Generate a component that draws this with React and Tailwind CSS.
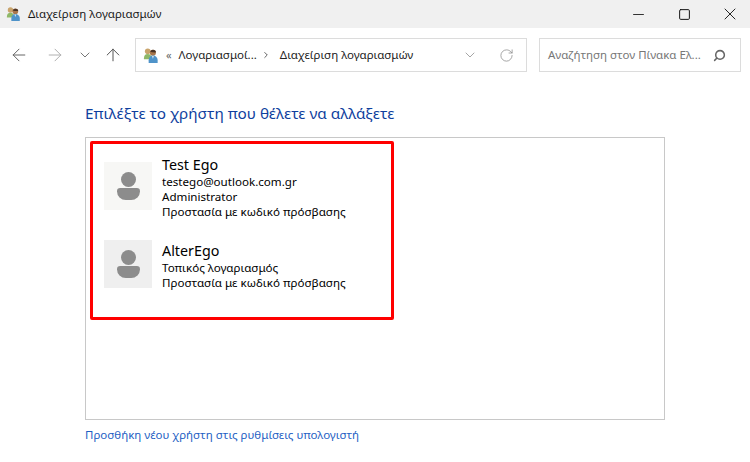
import React from "react";
import { ArrowLeft, ArrowRight, ArrowUp, ChevronDown, ChevronRight, RotateCw, Minus, Square, X, Search } from "lucide-react";

function UsersIcon({ size = 18 }) {
  return (
    <svg width={size} height={size} viewBox="0 0 18 18" className="shrink-0">
      <circle cx="5" cy="4.500" r="3" fill="#c9a46c" />
      <path d="M1 12c0-3 1.500-4.500 4-4.500S9 9 9 12v1H1z" fill="#8fb868" />
      <circle cx="10.500" cy="6" r="3.200" fill="#a9764a" />
      <path d="M10.500 3c2 0 3.200 1 3.200 2.500-2 .5-4.500 0-6-.5.500-1.200 1.500-2 2.800-2z" fill="#4a3325" />
      <path d="M6 17v-3c0-3 2-5 4.500-5S15.500 11 15.500 14v3z" fill="#4f93c9" />
      <path d="M9.500 9.500h2l-1 3z" fill="#dfeaf3" />
    </svg>
  );
}

function Avatar({ bg }) {
  return (
    <div className={`w-12 h-12 shrink-0 flex flex-col items-center justify-center ${bg}`}>
      <div className="w-[15px] h-[15px] rounded-full bg-[#8c8c8c]" />
      <div className="w-[23px] h-[12px] bg-[#8c8c8c] rounded-t-[4px] rounded-b-[11px] mt-[1px]" />
    </div>
  );
}

function Account({ avatar, name, lines }) {
  return (
    <div className="flex items-center gap-[10px] h-12">
      <Avatar bg={avatar} />
      <div className="mt-[1px]">
        <div className="text-[14.300px] leading-[18px] pt-[2px] text-black">{name}</div>
        {lines.map((line) => (
          <div key={line} className="text-[11.600px] leading-[15px] text-black">
            {line}
          </div>
        ))}
      </div>
    </div>
  );
}

export default function App() {
  return (
    <div className="w-[750px] h-[462px] bg-white overflow-hidden font-['Noto_Sans','Open_Sans',sans-serif]">
      <div className="h-[28px] bg-[#f0f0f0] flex items-center pl-[6px]">
        <UsersIcon size={16} />
        <span className="ml-[6px] text-[11.500px] text-[#1a1a1a]">Διαχείριση λογαριασμών</span>
        <div className="ml-auto -mr-[3px] flex items-center text-[#111]">
          <div className="w-[46px] flex justify-center"><Minus size={17} strokeWidth={1.2} /></div>
          <div className="w-[46px] flex justify-center"><Square size={13} strokeWidth={1.8} /></div>
          <div className="w-[46px] flex justify-center"><X size={20} strokeWidth={1.1} /></div>
        </div>
      </div>

      <div className="h-[54px] flex items-center pl-[9px]">
        <ArrowLeft size={20} strokeWidth={1.2} className="text-[#666]" />
        <ArrowRight size={20} strokeWidth={1.2} className="ml-[16px] text-[#b0b0b0]" />
        <ChevronDown size={16} strokeWidth={1.5} className="ml-[12px] text-[#777]" />
        <ArrowUp size={20} strokeWidth={1.2} className="ml-[10px] text-[#555]" />
        <div className="ml-[12px] w-[392px] h-[34px] border border-[#dcdcdc] flex items-center pl-[7px] pr-[12px]">
          <UsersIcon size={17} />
          <span className="ml-[6px] text-[11px] text-[#666]">«</span>
          <span className="ml-[7px] text-[11.500px] text-[#222] whitespace-nowrap">Λογαριασμοί...</span>
          <ChevronRight size={10} strokeWidth={2} className="ml-[4px] text-[#444]" />
          <span className="ml-[9px] text-[11.500px] text-[#222] whitespace-nowrap">Διαχείριση λογαριασμών</span>
          <ChevronDown size={16} strokeWidth={1} className="ml-auto text-[#777]" />
          <RotateCw size={15} strokeWidth={1.2} className="ml-[21px] text-[#888]" />
        </div>
        <div className="ml-[12px] w-[202px] h-[34px] border border-[#dcdcdc] flex items-center pl-[8px] pr-[14px]">
          <span className="text-[11.500px] text-[#777] whitespace-nowrap">Αναζήτηση στον Πίνακα Ελ...</span>
          <Search size={13} strokeWidth={2.8} className="ml-auto text-[#666] -scale-x-100" />
        </div>
      </div>

      <div className="pl-[85px] pt-[21px]">
        <h1 className="text-[15.300px] leading-[20px] text-[#0f3f9e] font-normal whitespace-nowrap">Επιλέξτε το χρήστη που θέλετε να αλλάξετε</h1>
        <div className="relative mt-[14px] w-[580px] h-[283px] border border-[#c8c8c8] pl-[18px] pt-[24px] flex flex-col gap-[30px]">
          <Account
            avatar="bg-[#f7f7f5]"
            name="Test Ego"
            lines={["testego@outlook.com.gr", "Administrator", "Προστασία με κωδικό πρόσβασης"]}
          />
          <Account
            avatar="bg-[#efefef]"
            name="AlterEgo"
            lines={["Τοπικός λογαριασμός", "Προστασία με κωδικό πρόσβασης"]}
          />
          <div className="absolute left-[4px] top-[3px] w-[304px] h-[179px] border-[3px] border-[#ff0000] rounded-[2px]" />
        </div>
        <a className="block mt-[7px] text-[11.500px] leading-[16px] text-[#1f5fc4]">Προσθήκη νέου χρήστη στις ρυθμίσεις υπολογιστή</a>
      </div>
    </div>
  );
}
